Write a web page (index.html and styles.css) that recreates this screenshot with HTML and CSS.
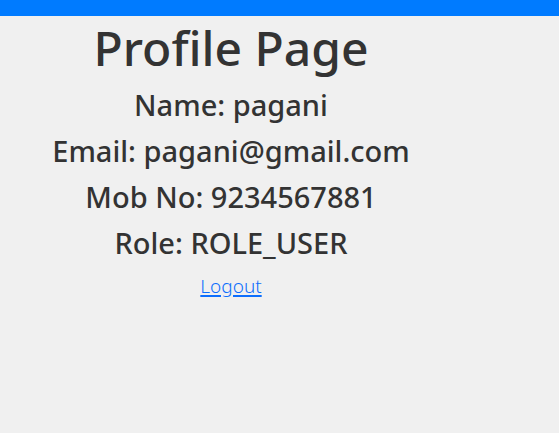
FILE: index.html
```html
<!DOCTYPE html>
<html lang="en">
<head>
<meta charset="utf-8">
<title>Profile Page</title>
<link rel="stylesheet" href="styles.css">
</head>
<body>
<header class="topbar"></header>
<main class="profile">
<h1 class="title">Profile Page</h1>
<h3 class="detail">Name: pagani</h3>
<h3 class="detail">Email: pagani@gmail.com</h3>
<h3 class="detail">Mob No: 9234567881</h3>
<h3 class="detail">Role: ROLE_USER</h3>
<a class="logout" href="#">Logout</a>
</main>
</body>
</html>
```

FILE: styles.css
```css
* {
  box-sizing: border-box;
}

body {
  margin: 0;
  background: #f0f0f0;
  color: #333;
  font-family: "Noto Sans", "Open Sans", sans-serif;
  font-size: 19px;
  line-height: 32px;
}

.topbar {
  height: 16px;
  background: #007bff;
}

.profile {
  padding: 2px 97px 0 0;
  text-align: center;
}

.title {
  margin: 0 0 8px;
  font-size: 48px;
  font-weight: 500;
  line-height: 60px;
}

.detail {
  margin: 0 0 8px;
  font-size: 29px;
  font-weight: 500;
  line-height: 38px;
}

.logout {
  color: #0d6efd;
  font-weight: 300;
  text-decoration: underline;
  text-decoration-thickness: 2px;
  text-underline-offset: 2px;
}
```
